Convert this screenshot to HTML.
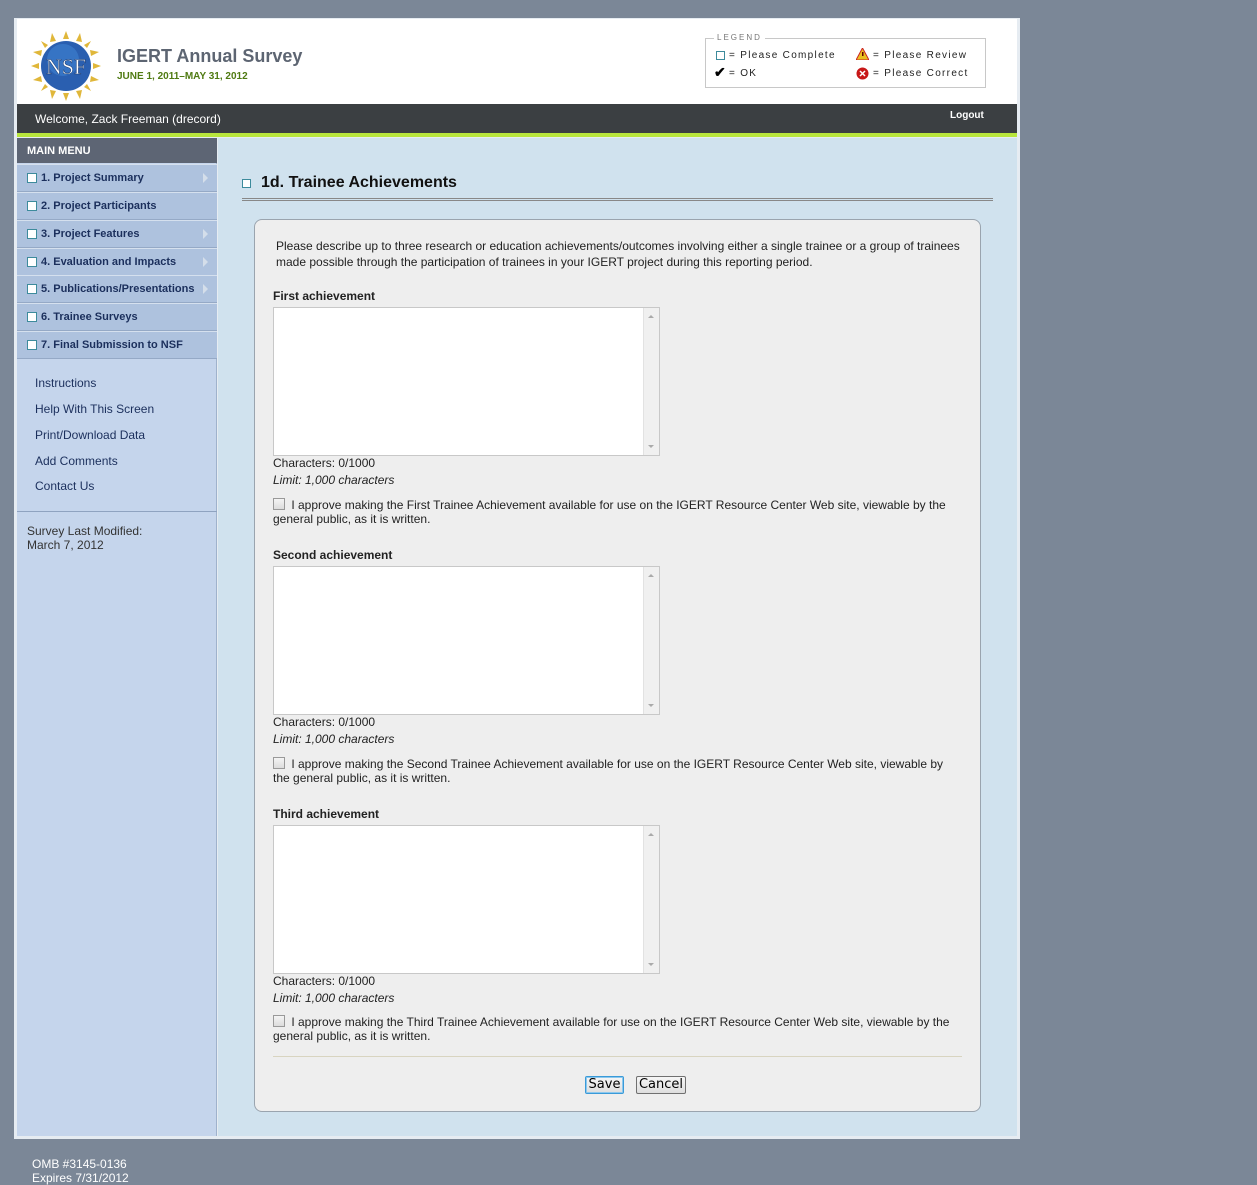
<!DOCTYPE html>
<html><head><meta charset="utf-8">
<style>
*{box-sizing:border-box;margin:0;padding:0}
body{width:1257px;height:1185px;background:#7b8797;font-family:"Liberation Sans",Arial,sans-serif;position:relative;overflow:hidden}
.a{position:absolute}
#wrap{left:14px;top:18px;width:1006px;height:1121px;background:#e6ecf2}
#hdr{left:17px;top:19px;width:1000px;height:85px;background:#fff}
#bar{left:17px;top:104px;width:1000px;height:29px;background:#3b3f42;color:#fff;font-size:12px}
#green{left:17px;top:133px;width:1000px;height:4px;background:#b8e63c}
#side{left:17px;top:138px;width:200px;height:998px;background:#c5d5ec;border-right:1px solid #9fb2cc}
#main{left:218px;top:138px;width:799px;height:998px;background:#d0e2ee}
.mi{position:absolute;left:17px;width:200px;height:28px;background:#aec2de;border-top:1px solid #d5e0ee;border-bottom:1px solid #95a9c6;font-size:11px;font-weight:bold;color:#1b2f5c;padding:7px 0 0 24px}
.mi:before{content:"";position:absolute;left:10px;top:8px;width:8px;height:8px;border:1px solid #3d8b9c;background:#fff}
.arr{position:absolute;right:9px;top:8px;width:0;height:0;border-left:5px solid #d4deea;border-top:5px solid transparent;border-bottom:5px solid transparent}
.lk{position:absolute;left:35px;font-size:12px;color:#1b2f5c}
.txt{font-size:12px;color:#222}
.ta{position:absolute;left:273px;width:387px;height:149px;background:#fff;border:1px solid #c8c8c8}
.ta .sb{position:absolute;right:0;top:0;width:16px;height:100%;background:#f0f0f0;border-left:1px solid #e2e2e2}
.ta .u{position:absolute;left:4px;top:7px;border-left:3px solid transparent;border-right:3px solid transparent;border-bottom:3px solid #aaa}
.ta .d{position:absolute;left:4px;bottom:7px;border-left:3px solid transparent;border-right:3px solid transparent;border-top:3px solid #aaa}
.cb{display:inline-block;width:12px;height:12px;border:1px solid #999;background:linear-gradient(#f4f4f4,#dcdcdc);vertical-align:-1px;margin-right:3px}
.btn{position:absolute;height:18px;font-size:13px;font-family:"DejaVu Sans","Liberation Sans",sans-serif;color:#000;background:linear-gradient(#f6f6f6,#dedede);border:1px solid #707070;border-radius:2px;text-align:center;line-height:16px}
.lg{font-family:"Liberation Sans",sans-serif;font-size:10px;letter-spacing:1.3px;color:#222}
</style></head><body>
<div class="a" id="wrap"></div>
<div class="a" id="hdr"></div>
<svg class="a" style="left:30px;top:30px" width="72" height="72" viewBox="0 0 72 72">
<g fill="#e0b73a">
<polygon points="36,1 39,9 33,9"/><polygon points="36,71 39,63 33,63"/><polygon points="1,36 9,33 9,39"/><polygon points="71,36 63,33 63,39"/>
<polygon points="11,11 18,15 15,18"/><polygon points="61,61 54,57 57,54"/><polygon points="61,11 54,15 57,18"/><polygon points="11,61 18,57 15,54"/>
<polygon points="22,3 26,11 20,12"/><polygon points="50,3 46,11 52,12"/><polygon points="22,69 26,61 20,60"/><polygon points="50,69 46,61 52,60"/>
<polygon points="3,22 11,26 12,20"/><polygon points="3,50 11,46 12,52"/><polygon points="69,22 61,26 60,20"/><polygon points="69,50 61,46 60,52"/>
</g>
<circle cx="36" cy="36" r="25" fill="#2a5fb0"/><circle cx="33" cy="30" r="16" fill="#3f82d2" opacity=".6"/>
<text x="36" y="44" font-family="Liberation Serif,serif" font-size="22" fill="#fff" text-anchor="middle" stroke="#1a3a70" stroke-width=".5">NSF</text>
</svg>
<div class="a" style="left:117px;top:46px;font-size:18px;font-weight:bold;color:#5d6572">IGERT Annual Survey</div>
<div class="a" style="left:117px;top:71px;font-size:10px;font-weight:bold;color:#4f7a12">JUNE 1, 2011–MAY 31, 2012</div>
<div class="a" style="left:705px;top:38px;width:281px;height:50px;border:1px solid #c8c8c8"></div>
<div class="a lg" style="left:714px;top:33px;background:#fff;padding:0 3px;color:#777;font-size:8px;letter-spacing:2px">LEGEND</div>
<div class="a" style="left:716px;top:51px;width:9px;height:9px;border:1px solid #3d8b9c"></div>
<div class="a lg" style="left:729px;top:50px">= Please Complete</div>
<div class="a" style="left:714px;top:64px;font-size:14px;font-weight:bold">✔</div>
<div class="a lg" style="left:729px;top:68px">= OK</div>
<svg class="a" style="left:856px;top:48px" width="13" height="12"><polygon points="6.5,0 13,12 0,12" fill="#e8c020" stroke="#c22" stroke-width="1"/><rect x="6" y="4" width="1.5" height="4" fill="#600"/></svg>
<div class="a lg" style="left:873px;top:50px">= Please Review</div>
<svg class="a" style="left:856px;top:67px" width="13" height="13"><circle cx="6.5" cy="6.5" r="6" fill="#c81818"/><path d="M4 4L9 9M9 4L4 9" stroke="#fff" stroke-width="1.5"/></svg>
<div class="a lg" style="left:873px;top:68px">= Please Correct</div>

<div class="a" id="bar"><span class="a" style="left:18px;top:8px">Welcome, Zack Freeman (drecord)</span><span class="a" style="left:933px;top:6px;font-size:10px;font-weight:bold">Logout</span></div>
<div class="a" id="green"></div>
<div class="a" id="side"></div>
<div class="a" id="main"></div>
<div class="a" style="left:17px;top:138px;width:200px;height:25px;background:#5d6574;color:#fff;font-size:11px;font-weight:bold;padding:7px 0 0 10px">MAIN MENU</div>
<div class="mi" style="top:164px">1. Project Summary<span class="arr"></span></div>
<div class="mi" style="top:192px">2. Project Participants</div>
<div class="mi" style="top:220px">3. Project Features<span class="arr"></span></div>
<div class="mi" style="top:248px">4. Evaluation and Impacts<span class="arr"></span></div>
<div class="mi" style="top:275px">5. Publications/Presentations<span class="arr"></span></div>
<div class="mi" style="top:303px">6. Trainee Surveys</div>
<div class="mi" style="top:331px">7. Final Submission to NSF</div>
<div class="lk" style="top:376px">Instructions</div>
<div class="lk" style="top:402px">Help With This Screen</div>
<div class="lk" style="top:428px">Print/Download Data</div>
<div class="lk" style="top:454px">Add Comments</div>
<div class="lk" style="top:479px">Contact Us</div>
<div class="a" style="left:17px;top:511px;width:200px;height:1px;background:#8fa3c0"></div>
<div class="a txt" style="left:27px;top:524px;color:#333;line-height:14px">Survey Last Modified:<br>March 7, 2012</div>

<div class="a" style="left:242px;top:179px;width:9px;height:9px;border:1px solid #3d8b9c;background:#fff"></div>
<div class="a" style="left:261px;top:174px;font-size:16px;font-weight:bold;color:#111">1d. Trainee Achievements</div>
<div class="a" style="left:242px;top:198px;width:751px;height:3px;border-top:1px solid #888;border-bottom:1px solid #888"></div>

<div class="a" style="left:254px;top:219px;width:727px;height:893px;background:#eeeeee;border:1px solid #9aa4ae;border-radius:8px"></div>
<div class="a txt" style="left:276px;top:238px;width:690px;line-height:16px">Please describe up to three research or education achievements/outcomes involving either a single trainee or a group of trainees made possible through the participation of trainees in your IGERT project during this reporting period.</div>

<div class="a txt" style="left:273px;top:289px;font-weight:bold">First achievement</div>
<div class="ta" style="top:307px"><div class="sb"><div class="u"></div><div class="d"></div></div></div>
<div class="a txt" style="left:273px;top:456px">Characters: 0/1000</div>
<div class="a txt" style="left:273px;top:473px;font-style:italic">Limit: 1,000 characters</div>
<div class="a txt" style="left:273px;top:498px;width:690px;line-height:14px"><span class="cb"></span> I approve making the First Trainee Achievement available for use on the IGERT Resource Center Web site, viewable by the general public, as it is written.</div>

<div class="a txt" style="left:273px;top:548px;font-weight:bold">Second achievement</div>
<div class="ta" style="top:566px"><div class="sb"><div class="u"></div><div class="d"></div></div></div>
<div class="a txt" style="left:273px;top:715px">Characters: 0/1000</div>
<div class="a txt" style="left:273px;top:732px;font-style:italic">Limit: 1,000 characters</div>
<div class="a txt" style="left:273px;top:757px;width:690px;line-height:14px"><span class="cb"></span> I approve making the Second Trainee Achievement available for use on the IGERT Resource Center Web site, viewable by the general public, as it is written.</div>

<div class="a txt" style="left:273px;top:807px;font-weight:bold">Third achievement</div>
<div class="ta" style="top:825px"><div class="sb"><div class="u"></div><div class="d"></div></div></div>
<div class="a txt" style="left:273px;top:974px">Characters: 0/1000</div>
<div class="a txt" style="left:273px;top:991px;font-style:italic">Limit: 1,000 characters</div>
<div class="a txt" style="left:273px;top:1015px;width:690px;line-height:14px"><span class="cb"></span> I approve making the Third Trainee Achievement available for use on the IGERT Resource Center Web site, viewable by the general public, as it is written.</div>

<div class="a" style="left:273px;top:1056px;width:689px;height:1px;background:#d8d4c0"></div>
<div class="btn" style="left:585px;top:1076px;width:39px;border-color:#3a9ad8;box-shadow:0 0 0 1px #8cc8ee inset">Save</div>
<div class="btn" style="left:636px;top:1076px;width:50px">Cancel</div>

<div class="a" style="left:32px;top:1157px;font-size:12px;color:#fff;line-height:14px">OMB #3145-0136<br>Expires 7/31/2012</div>
</body></html>
